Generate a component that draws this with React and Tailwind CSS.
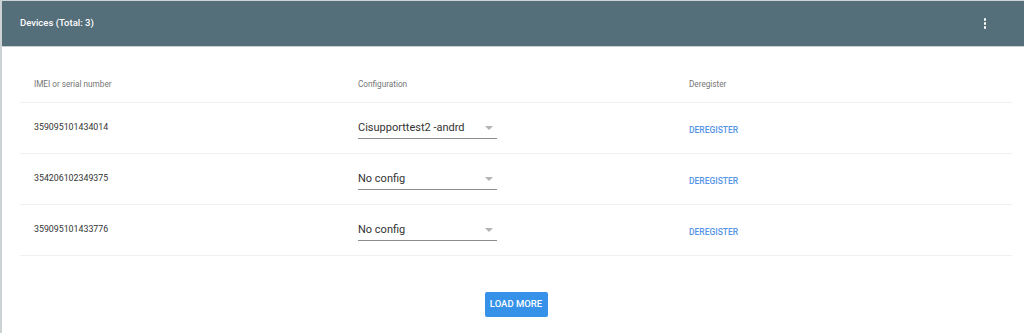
import React from 'react';

const devices = [
  { id: '359095101434014', config: 'Cisupporttest2 -andrd' },
  { id: '354206102349375', config: 'No config' },
  { id: '359095101433776', config: 'No config' },
];

function ConfigSelect({ value }) {
  return (
    <div className="relative w-[139px] h-[22px] flex items-center border-b border-[#8c8c8c]">
      <span className="text-[11px] text-[#333] leading-none">{value}</span>
      {/* caret */}
      <span className="absolute right-[4px] top-[9px] w-0 h-0 border-l-[4px] border-r-[4px] border-t-[4px] border-l-transparent border-r-transparent border-t-[#b3b3b3]" />
    </div>
  );
}

export default function App() {
  return (
    <div className="w-[1024px] h-[333px] bg-white border-t border-l-2 border-[#cdd2d4] font-['Roboto',_'Liberation_Sans',_sans-serif] overflow-hidden">
      {/* toolbar */}
      <div className="h-[46px] bg-[#546e7a] flex items-center justify-between pl-[18px] pr-[38px] border-b border-[#c9cfd2]">
        <span className="text-white text-[9.5px] font-medium">Devices (Total: 3)</span>
        <div className="flex flex-col gap-[1.5px]">
          <span className="w-[2.5px] h-[2.5px] bg-white rounded-full" />
          <span className="w-[2.5px] h-[2.5px] bg-white rounded-full" />
          <span className="w-[2.5px] h-[2.5px] bg-white rounded-full" />
        </div>
      </div>

      {/* table */}
      <div className="pl-[18px] pr-[12px] pt-[20px]">
        <div className="grid grid-cols-[324px_331px_1fr] h-[36px] items-center border-b border-[#f0f0f0] text-[8.2px] text-[#757575]">
          <div className="pl-[14px]">IMEI or serial number</div>
          <div className="pl-[14px]">Configuration</div>
          <div className="pl-[14px]">Deregister</div>
        </div>
        {devices.map((d) => (
          <div key={d.id} className="grid grid-cols-[324px_331px_1fr] h-[51px] items-center border-b border-[#f0f0f0]">
            <div className="pl-[14px] text-[8.8px] text-[#333]">{d.id}</div>
            <div className="pl-[14px]">
              <ConfigSelect value={d.config} />
            </div>
            <div className="pl-[14px]">
              <button className="text-[8.5px] font-medium text-[#5594e6]">DEREGISTER</button>
            </div>
          </div>
        ))}
        <div className="flex justify-center pt-[36px]">
          <button className="w-[63px] h-[25px] rounded-[2px] bg-[#3592e8] text-white text-[9.5px] font-medium">
            LOAD MORE
          </button>
        </div>
      </div>
    </div>
  );
}
